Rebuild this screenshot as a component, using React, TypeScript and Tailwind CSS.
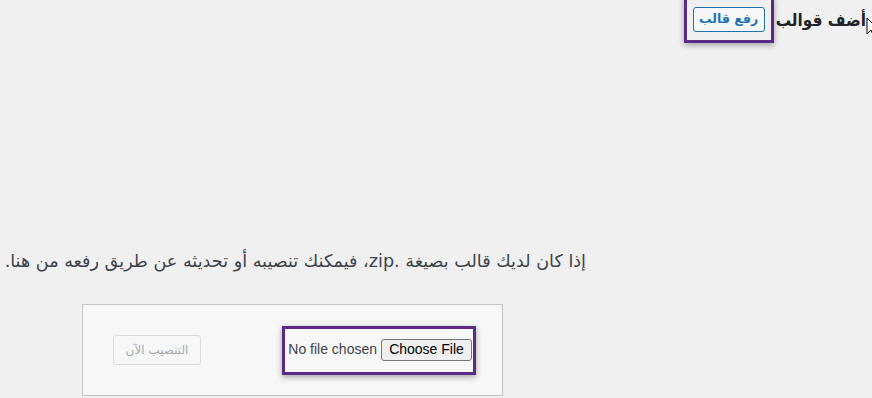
import React from 'react';

const arabic = { fontFamily: '"DejaVu Sans", "Noto Sans", sans-serif' };
const arabicCondensed = { fontFamily: '"DejaVu Sans Condensed", "DejaVu Sans", sans-serif' };
const latin = { fontFamily: '"Liberation Sans", Arial, sans-serif' };

function Cursor() {
  return (
    <svg
      className="absolute left-[866px] top-[17px]"
      width="14"
      height="22"
      viewBox="0 0 14 22"
    >
      <path
        d="M1 1 L1 17 L5 13 L8 20 L10 19 L7 12 L12 12 Z"
        fill="#fff"
        stroke="#000"
        strokeWidth="1"
        strokeLinejoin="round"
      />
    </svg>
  );
}

export default function App() {
  return (
    <div dir="rtl" className="relative w-[872px] h-[398px] overflow-hidden bg-[#f0f0f1]">
      {/* عنوان الصفحة */}
      <div className="flex items-start pr-[6px]">
        <h1
          style={arabicCondensed}
          className="mt-[8px] text-[17px] leading-[24px] font-bold text-[#1d2327] whitespace-nowrap"
        >
          أضف قوالب
        </h1>
        <div className="mr-[2px] -mt-[3px] border-[3px] border-[#5b2a86] px-[6px] pt-[7px] pb-[8px] shadow-[0_2px_6px_rgba(0,0,0,0.35)]">
          <button
            style={arabic}
            className="block h-[25px] w-[72px] rounded-[3px] border border-[#2271b1] bg-[#f6f7f7] text-[12.5px] font-bold text-[#2271b1]"
          >
            رفع قالب
          </button>
        </div>
      </div>
      <Cursor />

      {/* الوصف */}
      <p
        style={arabic}
        className="mt-[207px] mr-[286px] text-[17.6px] leading-[22px] text-[#3c434a] whitespace-nowrap"
      >
        إذا كان لديك قالب بصيغة .zip، فيمكنك تنصيبه أو تحديثه عن طريق رفعه من هنا.
      </p>

      {/* نموذج الرفع */}
      <div className="mt-[32px] mr-[369px] flex h-[92px] w-[421px] items-center justify-between border border-[#c3c4c7] bg-[#f6f7f7] pr-[26px] pl-[30px]">
        <div className="flex items-center border-[3px] border-[#5b2a86] pr-[1px] pl-[3px] pt-[10px] pb-[11px] shadow-[0_2px_6px_rgba(0,0,0,0.35)]">
          <div dir="ltr" className="flex items-center" style={latin}>
            <span className="text-[14px] text-[#3c434a]">No file chosen</span>
            <span className="ml-[4px] flex h-[22px] w-[91px] items-center justify-center rounded-[3px] border border-[#767676] bg-[#efefef] text-[14px] text-black">
              Choose File
            </span>
          </div>
        </div>
        <button
          style={arabic}
          className="h-[30px] w-[88px] rounded-[3px] border border-[#dcdcde] bg-[#f6f7f7] text-[12px] text-[#a7aaad]"
        >
          التنصيب الآن
        </button>
      </div>
    </div>
  );
}
